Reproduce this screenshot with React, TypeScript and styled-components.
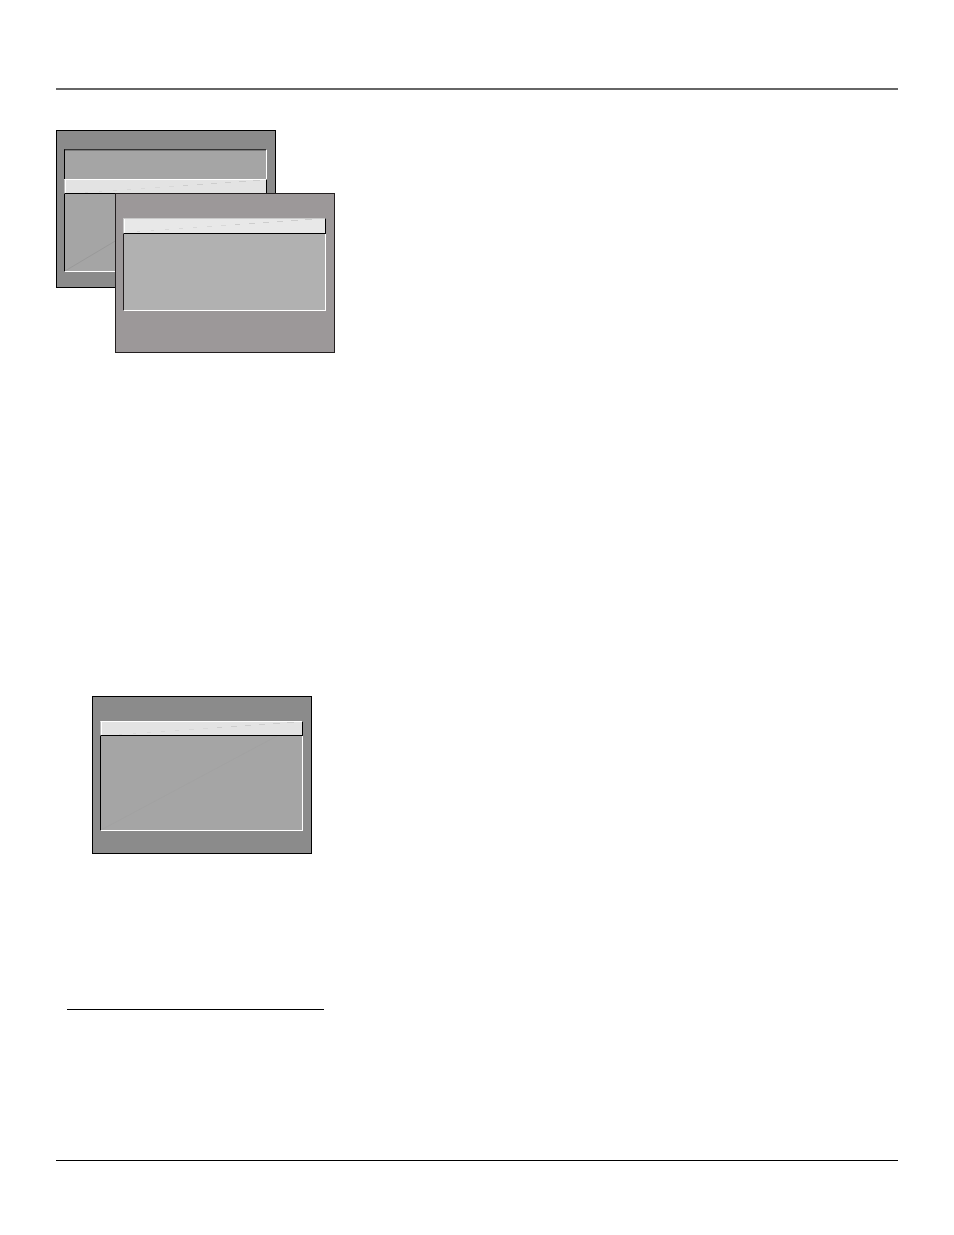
import React from "react";
import styled, { createGlobalStyle } from "styled-components";

const GlobalStyle = createGlobalStyle`
  *, *::before, *::after { box-sizing: border-box; }
  body { margin: 0; background: #fff; font-family: "Liberation Sans", Arial, sans-serif; }
`;

const Page = styled.div`
  display: flex;
  flex-direction: column;
  padding: 88px 56px 74px;
`;

const HeaderRule = styled.hr`
  width: 100%;
  height: 2px;
  margin: 0;
  border: 0;
  background: #666;
`;

const FooterRule = styled.hr`
  width: 100%;
  height: 1px;
  margin: 150px 0 0;
  border: 0;
  background: #000;
`;

const NoteRule = styled.hr`
  width: 257px;
  max-width: 100%;
  height: 1px;
  margin: 155px 0 0 11px;
  border: 0;
  background: #000;
`;

const StackedFigure = styled.figure`
  position: relative;
  width: 279px;
  margin: 40px 0 0;
  padding-bottom: 65px;
`;

const SingleFigure = styled.figure`
  margin: 343px 0 0 36px;
`;

const Screen = styled.div<{ $tone: "dark" | "warm"; $top: number; $bottom: number }>`
  width: 220px;
  padding: ${(p) => p.$top}px 8px ${(p) => p.$bottom}px 7px;
  border: 1px solid ${(p) => (p.$tone === "warm" ? "#231f20" : "#000")};
  background: ${(p) => (p.$tone === "warm" ? "#9c9899" : "#8b8b8b")};
`;

const Overlay = styled.div`
  position: absolute;
  left: 59px;
  top: 63px;
`;

const List = styled.div<{ $light?: boolean; $header?: boolean }>`
  display: flex;
  flex-direction: column;
  border: 1px solid #fff;
  border-left-color: ${(p) => (p.$light ? "#231f20" : "#000")};
  border-top: ${(p) => (p.$header ? "1px solid #333" : "0")};
  background: ${(p) => (p.$light ? "#b1b1b1" : "#a5a5a5")};
`;

const TitleArea = styled.div`
  height: 29px;
  border-top: 1px solid #7a7a7a;
`;

const Highlight = styled.div<{ $light?: boolean }>`
  height: ${(p) => (p.$light ? 16 : 15)}px;
  margin: 0 -1px;
  border: 1px solid #000;
  border-top-color: ${(p) => (p.$light ? "#c9c9c9" : "#fff")};
  border-left-color: ${(p) => (p.$light ? "#c9c9c9" : "#bbb")};
  background: ${(p) => (p.$light ? "#e8e8e8" : "#e3e3e3")};
  box-shadow: inset 1px 0 0 #fff;
`;

const Body = styled.div<{ $height: number }>`
  height: ${(p) => p.$height}px;
`;

const Drawing = styled.svg`
  display: block;
  width: 100%;
  height: 100%;
`;

function Streak({ start, rows }: { start: number; rows: number }) {
  return (
    <Drawing aria-hidden="true" shapeRendering="crispEdges">
      {Array.from({ length: rows }, (_, i) => (
        <rect
          key={i}
          x={start + i * 14}
          y={rows - 1 - i}
          width={3 + Math.round(i / 3)}
          height={1}
          fill={i > 6 ? "#cdcdcd" : "#d8d8d8"}
        />
      ))}
    </Drawing>
  );
}

function Crease({ x, y, height, color }: { x: number; y: number; height: number; color: string }) {
  return (
    <Drawing aria-hidden="true">
      <line x1="0" y1={height} x2={x} y2={y} stroke={color} strokeWidth="1" />
    </Drawing>
  );
}

export default function App() {
  return (
    <>
      <GlobalStyle />
      <Page>
        <HeaderRule />
        <StackedFigure>
          <Screen $tone="dark" $top={18} $bottom={15}>
            <List $header>
              <TitleArea />
              <Highlight>
                <Streak start={20} rows={13} />
              </Highlight>
              <Body $height={77}>
                <Crease x={129} y={0} height={77} color="#999" />
              </Body>
            </List>
          </Screen>
          <Overlay>
            <Screen $tone="warm" $top={24} $bottom={41}>
              <List $light>
                <Highlight $light>
                  <Streak start={13} rows={13} />
                </Highlight>
                <Body $height={76} />
              </List>
            </Screen>
          </Overlay>
        </StackedFigure>
        <SingleFigure>
          <Screen $tone="dark" $top={24} $bottom={22}>
            <List>
              <Highlight>
                <Streak start={18} rows={13} />
              </Highlight>
              <Body $height={94}>
                <Crease x={176} y={0} height={94} color="#a2a2a2" />
              </Body>
            </List>
          </Screen>
        </SingleFigure>
        <NoteRule />
        <FooterRule />
      </Page>
    </>
  );
}
